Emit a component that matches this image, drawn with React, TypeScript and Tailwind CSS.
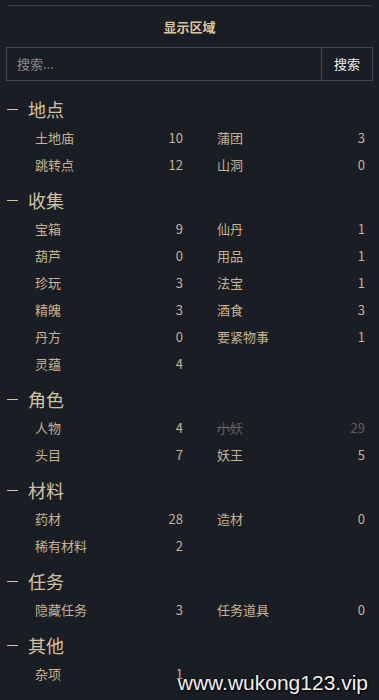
import React from "react";

type Item = { label: string; count: number; off?: boolean };
type Section = { title: string; items: Item[] };

const sections: Section[] = [
  {
    title: "地点",
    items: [
      { label: "土地庙", count: 10 },
      { label: "蒲团", count: 3 },
      { label: "跳转点", count: 12 },
      { label: "山洞", count: 0 },
    ],
  },
  {
    title: "收集",
    items: [
      { label: "宝箱", count: 9 },
      { label: "仙丹", count: 1 },
      { label: "葫芦", count: 0 },
      { label: "用品", count: 1 },
      { label: "珍玩", count: 3 },
      { label: "法宝", count: 1 },
      { label: "精魄", count: 3 },
      { label: "酒食", count: 3 },
      { label: "丹方", count: 0 },
      { label: "要紧物事", count: 1 },
      { label: "灵蕴", count: 4 },
    ],
  },
  {
    title: "角色",
    items: [
      { label: "人物", count: 4 },
      { label: "小妖", count: 29, off: true },
      { label: "头目", count: 7 },
      { label: "妖王", count: 5 },
    ],
  },
  {
    title: "材料",
    items: [
      { label: "药材", count: 28 },
      { label: "造材", count: 0 },
      { label: "稀有材料", count: 2 },
    ],
  },
  {
    title: "任务",
    items: [
      { label: "隐藏任务", count: 3 },
      { label: "任务道具", count: 0 },
    ],
  },
  {
    title: "其他",
    items: [{ label: "杂项", count: 1 }],
  },
];

function SectionBlock({ section }: { section: Section }) {
  return (
    <div className="mb-[8px]">
      <div className="flex h-[29px] items-center text-[18px] text-[#d2c2a4]">
        <span className="ml-[7px] inline-block h-[1.5px] w-[11px] bg-[#d2c2a4]" />
        <span className="ml-[10px]">{section.title}</span>
      </div>
      <div className="grid grid-cols-2 gap-x-[34px] pl-[35px] pr-[14px]">
        {section.items.map((it) => (
          <div
            key={it.label}
            className={`flex h-[27px] items-center justify-between text-[13px] ${
              it.off ? "text-[#5f5f5f]" : "text-[#c4b394]"
            }`}
          >
            <span className={it.off ? "line-through" : ""}>{it.label}</span>
            <span>{it.count}</span>
          </div>
        ))}
      </div>
    </div>
  );
}

export default function App() {
  return (
    <div
      className="relative min-h-screen w-[379px] overflow-hidden bg-[#1a1d23]"
      style={{ fontFamily: '"Noto Sans CJK SC", "Noto Sans", sans-serif' }}
    >
      <div className="mx-[8px] pt-[5px]">
        <div className="h-px bg-[#3c3f45]" />
      </div>
      <div className="mt-[11px] flex h-[20px] items-center justify-center text-[13px] font-bold text-[#d8c7a6]">
        显示区域
      </div>
      <div className="mx-[6px] mt-[10px] flex h-[34px] border border-[#45484e]">
        <input
          className="min-w-0 flex-1 bg-transparent px-[10px] text-[13px] text-[#ddd] outline-none placeholder:text-[#8a8a8a]"
          placeholder="搜索..."
        />
        <button className="w-[51px] border-l border-[#45484e] text-[13px] text-[#ececec]">
          搜索
        </button>
      </div>
      <div className="mt-[14px]">
        {sections.map((s) => (
          <SectionBlock key={s.title} section={s} />
        ))}
      </div>
      <div
        className="absolute bottom-[2px] right-[11px] text-[21px] text-[#f0f0f0]"
        style={{
          fontFamily: '"Liberation Sans", Arial, sans-serif',
          textShadow: "0 0 2px #000, 1px 1px 2px #000",
        }}
      >
        www.wukong123.vip
      </div>
    </div>
  );
}
